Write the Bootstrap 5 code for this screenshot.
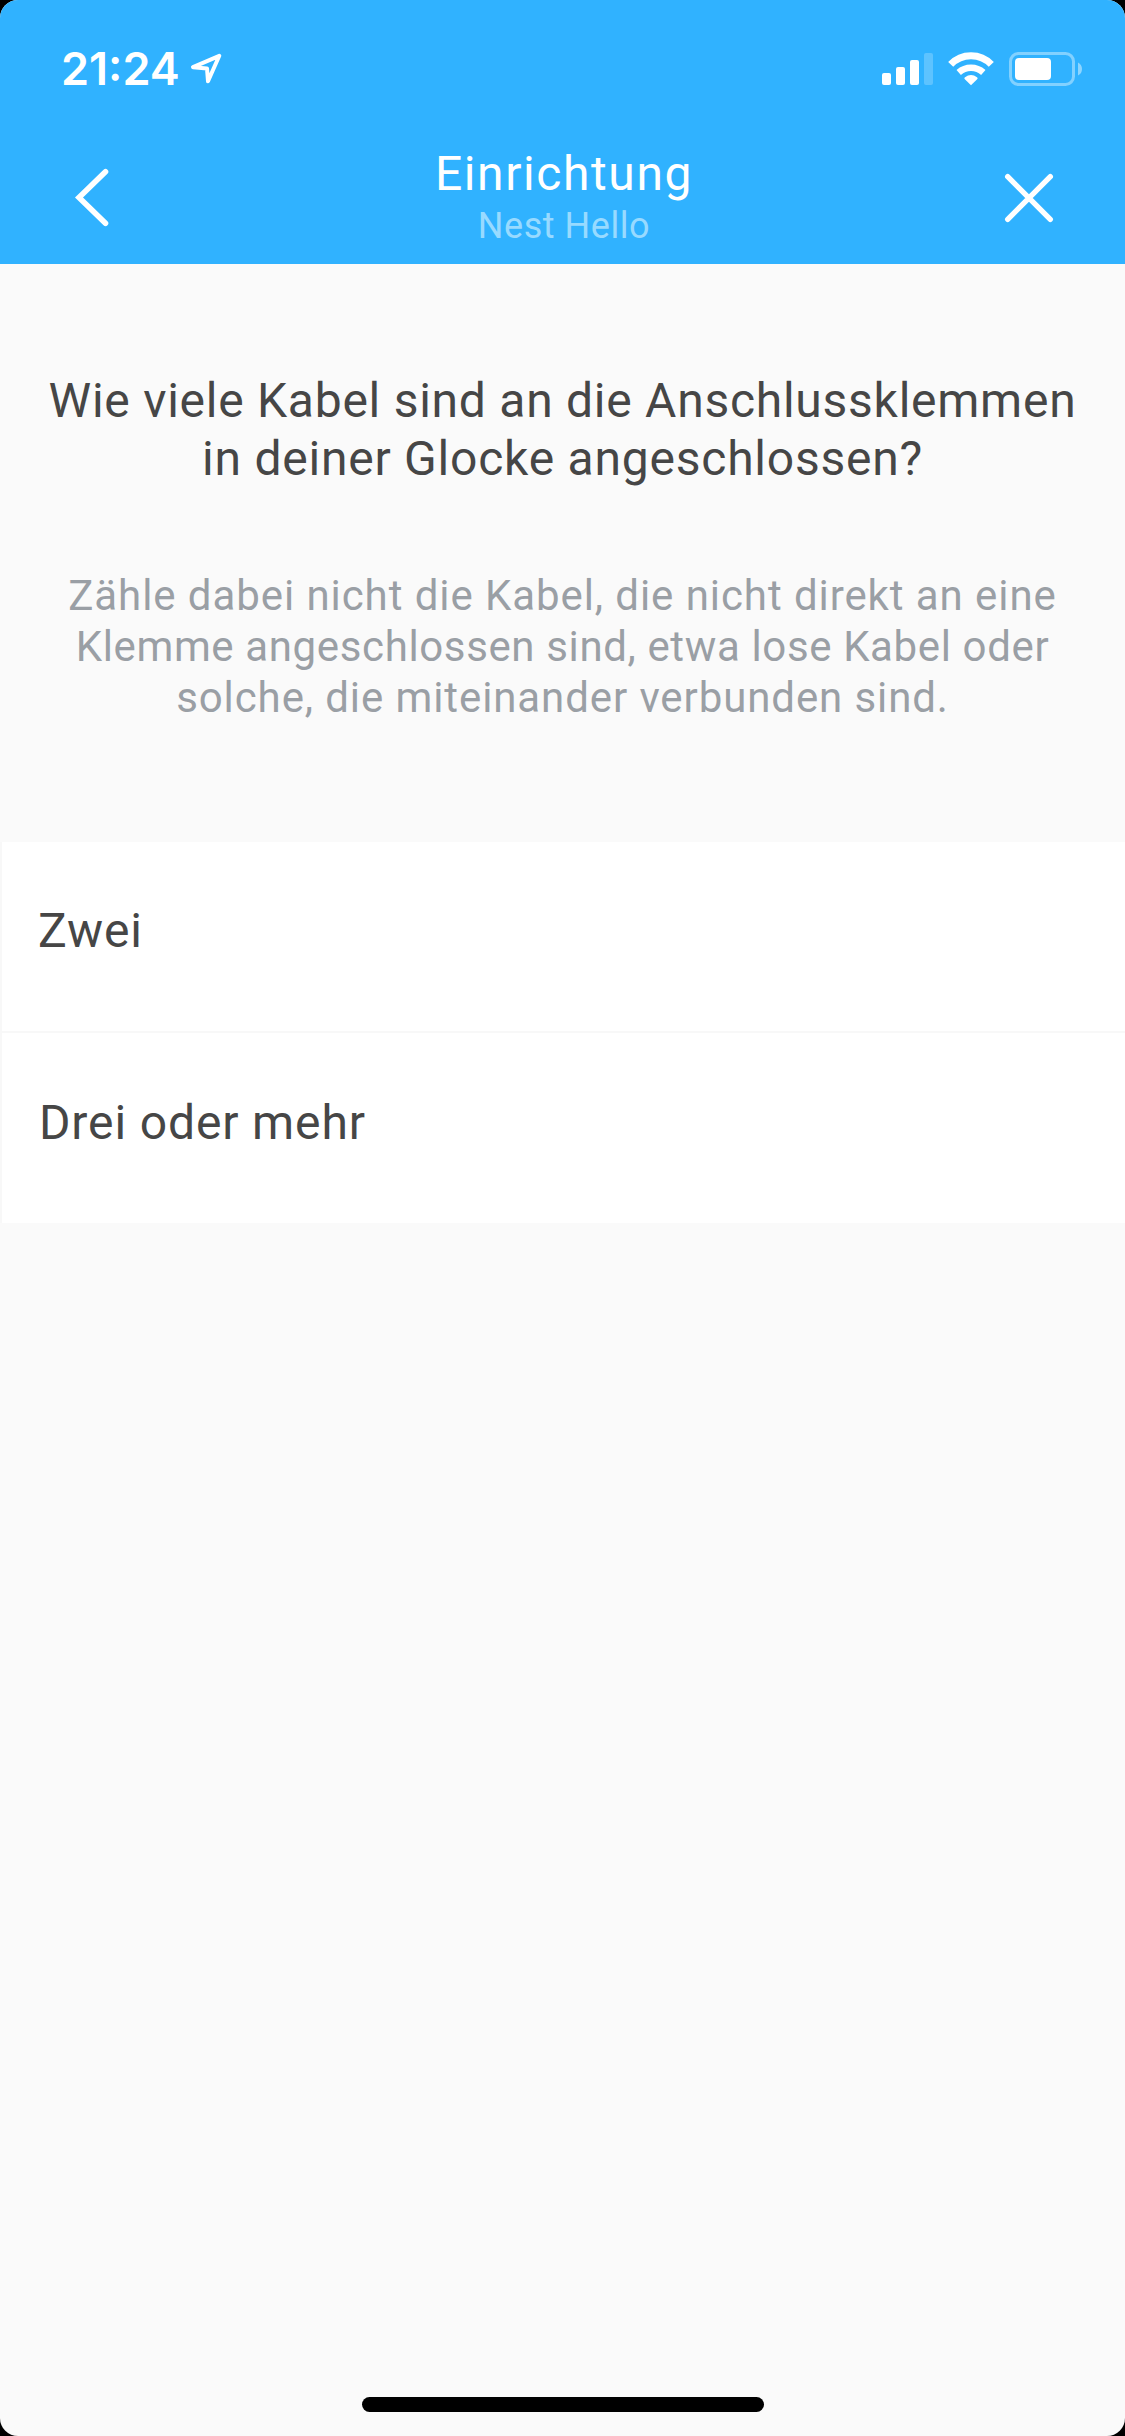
<!DOCTYPE html>
<html lang="de">
<head>
<meta charset="utf-8">
<meta name="viewport" content="width=device-width, initial-scale=1">
<title>Einrichtung – Nest Hello</title>
<link href="https://cdn.jsdelivr.net/npm/bootstrap@5.3.0/dist/css/bootstrap.min.css" rel="stylesheet">
<style>
body{background:#000;font-family:Roboto,"Liberation Sans",sans-serif;color:#464646}
.phone{width:1125px;height:2436px;border-radius:18px;background:#fafafa}
.topbar{height:264px;background:#30b2ff}
.statusline{height:138px;padding:42px 42px 0 61px}
.clock{font:600 45px/54px Inter,sans-serif}
.locate{margin:10px 0 0 9px}
.indicators{margin-top:8px}
.navline{height:126px;padding:0 69px 0 71px}
.titles{padding-top:7px}
.head{font-size:48px;line-height:58px;letter-spacing:1.6px}
.sub{font-size:36px;line-height:42px;letter-spacing:.55px;margin-top:2px;color:#98daff}
.question{font-size:48px;line-height:58px;padding-top:108px}
.detail{font-size:42px;line-height:51px;margin-top:82px;color:#9a9fa5}
.question span,.detail span{display:block;white-space:nowrap}
.ls-a{letter-spacing:.74px}
.ls-b{letter-spacing:.77px}
.ls-c{letter-spacing:.925px}
.ls-d{letter-spacing:.63px}
.ls-e{letter-spacing:.9px}
.choices{margin-top:119px}
.choice{font-size:48px;line-height:58px;letter-spacing:.87px;height:190px;padding:61px 37px 0;background:#fff;border:0 solid #f8f8f8;border-left-width:2px;color:#464646}
.choice:first-child{height:191px;padding:60px 36px 0;border-bottom-width:2px}
.homebar{width:402px;height:15px;margin-bottom:24px}
</style>
</head>
<body>
<div class="phone d-flex flex-column overflow-hidden">
  <header class="topbar text-white flex-shrink-0">
    <div class="statusline d-flex justify-content-between align-items-start">
      <div class="d-flex align-items-start">
        <span class="clock">21:24</span>
        <svg class="locate" width="34" height="34" viewBox="0 0 34 34" fill="none" stroke="#fff" stroke-width="4" stroke-linejoin="round"><path d="M30.300 3.800 4 15.200 18 16.400 19 29.300Z"/></svg>
      </div>
      <svg class="indicators" width="201" height="38" viewBox="0 0 201 38">
        <g fill="#fff">
          <rect x="0" y="23" width="9" height="12" rx="2"/>
          <rect x="14" y="17" width="9" height="18" rx="2"/>
          <rect x="28" y="10" width="9" height="25" rx="2"/>
          <rect x="42" y="3" width="9" height="32" rx="2" fill-opacity=".22"/>
          <path d="M89 35.300 82.600 29Q82 28.100 83 27.300Q89 22.700 95 27.300Q96 28.100 95.400 29Z"/>
        </g>
        <g fill="none" stroke="#fff">
          <path stroke-width="7" d="M68.700 14.400A28 28 0 0 1 109.300 14.400"/>
          <path stroke-width="6.600" d="M76.700 22.500A18.500 18.500 0 0 1 101.300 22.500"/>
        </g>
        <rect x="128.500" y="3.500" width="63" height="31" rx="8" fill="none" stroke="#fff" stroke-opacity=".4" stroke-width="3"/>
        <rect x="133" y="8" width="36" height="22" rx="4" fill="#fff"/>
        <path d="M196 12.500Q200 14.500 200 19T196 25.500Z" fill="#fff" fill-opacity=".45"/>
      </svg>
    </div>
    <nav class="navline d-flex justify-content-between align-items-start">
      <a href="#" aria-label="Zurück"><svg width="55" height="126" viewBox="0 0 55 126" fill="none" stroke="#fff" stroke-width="5.600" stroke-linecap="round"><path d="M34.500 33.700 8 59.500 34.500 85.300"/></svg></a>
      <div class="titles text-center">
        <div class="head">Einrichtung</div>
        <div class="sub">Nest Hello</div>
      </div>
      <a href="#" aria-label="Schließen"><svg width="54" height="126" viewBox="0 0 54 126" fill="none" stroke="#fff" stroke-width="5.400" stroke-linecap="round"><path d="M5.700 38.700 48.300 81.300M48.300 38.700 5.700 81.300"/></svg></a>
    </nav>
  </header>
  <main class="flex-grow-1">
    <h1 class="question text-center fw-normal mb-0"><span class="ls-a">Wie viele Kabel sind an die Anschlussklemmen</span> <span class="ls-b">in deiner Glocke angeschlossen?</span></h1>
    <p class="detail text-center mb-0"><span class="ls-c">Zähle dabei nicht die Kabel, die nicht direkt an eine</span> <span class="ls-d">Klemme angeschlossen sind, etwa lose Kabel oder</span> <span class="ls-e">solche, die miteinander verbunden sind.</span></p>
    <div class="choices list-group list-group-flush rounded-0">
      <a href="#" class="choice text-decoration-none">Zwei</a>
      <a href="#" class="choice text-decoration-none">Drei oder mehr</a>
    </div>
  </main>
  <div class="homebar bg-black rounded-pill mx-auto flex-shrink-0"></div>
</div>
<script src="https://cdn.jsdelivr.net/npm/bootstrap@5.3.0/dist/js/bootstrap.bundle.min.js"></script>
</body>
</html>
